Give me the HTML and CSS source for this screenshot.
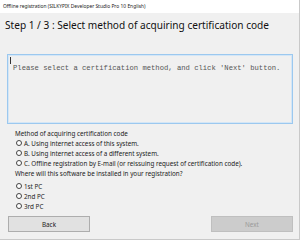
FILE: index.html
```html
<!DOCTYPE html>
<html lang="en">
<head>
  <meta charset="UTF-8">
  <title>Offline registration</title>
  <link rel="stylesheet" href="styles.css">
</head>
<body>
  <div class="window">
    <div class="title-bar">Offline registration (SILKYPIX Developer Studio Pro 10 English)</div>
    <h1 class="step-title">Step 1 / 3 : Select method of acquiring certification code</h1>
    <div class="message-box">
      <span class="caret"></span>
      <p class="message">Please select a certification method, and click 'Next' button.</p>
    </div>
    <div class="options">
      <div class="group-label">Method of acquiring certification code</div>
      <label class="radio-row"><span class="radio"></span>A. Using internet access of this system.</label>
      <label class="radio-row"><span class="radio"></span>B. Using internet access of a different system.</label>
      <label class="radio-row"><span class="radio"></span>C. Offline registration by E-mail (or reissuing request of certification code).</label>
      <div class="group-label">Where will this software be installed in your registration?</div>
      <div class="pc-list">
        <label class="radio-row"><span class="radio"></span>1st PC</label>
        <label class="radio-row"><span class="radio"></span>2nd PC</label>
        <label class="radio-row"><span class="radio"></span>3rd PC</label>
      </div>
    </div>
    <div class="buttons">
      <button class="btn">Back</button>
      <button class="btn disabled">Next</button>
    </div>
  </div>
</body>
</html>
```
FILE: styles.css
```css
body {
  margin: 0;
  font-family: "Noto Sans", "Open Sans", sans-serif;
}
.window {
  width: 299px;
  height: 239px;
  background-color: #f0f0f0;
  border-right: 1px solid #c9c9c9;
  border-bottom: 1px solid #c9c9c9;
  overflow: hidden;
}
.title-bar {
  height: 13px;
  line-height: 13px;
  background-color: #fff;
  font-size: 4.9px;
  color: #222;
  padding-left: 3px;
  white-space: nowrap;
}
.step-title {
  margin: 0;
  padding: 6px 0 0 5px;
  height: 16px;
  line-height: 13px;
  font-size: 10.1px;
  font-weight: normal;
  color: #111;
  white-space: nowrap;
}
.message-box {
  position: relative;
  margin: 19px 0 0 7px;
  width: 284px;
  height: 68px;
  border: 1px solid #9bc8ef;
  box-shadow: 0 0 0 1px #d4e6f6 inset;
}
.caret {
  position: absolute;
  left: 2px;
  top: 2px;
  width: 1px;
  height: 7px;
  background-color: #333;
}
.message {
  margin: 9px 0 0 5px;
  font-family: "Liberation Mono", monospace;
  font-size: 7.2px;
  color: #555;
  white-space: nowrap;
}
.options {
  padding: 4px 0 0 15px;
  font-size: 6.3px;
  color: #222;
}
.group-label,
.radio-row {
  display: flex;
  align-items: center;
  height: 10px;
  white-space: nowrap;
}
.radio {
  width: 4px;
  height: 4px;
  border: 1px solid #444;
  border-radius: 50%;
  background-color: #fff;
  margin: 0 2px 0 1px;
}
.pc-list {
  margin-top: 3px;
}
.buttons {
  display: flex;
  justify-content: space-between;
  padding: 5px 6px 0 8px;
}
.btn {
  width: 82px;
  height: 16px;
  padding: 0;
  font-family: inherit;
  font-size: 6.3px;
  color: #222;
  background-color: #e1e1e1;
  border: 1px solid #adadad;
}
.btn.disabled {
  background-color: #cccccc;
  border-color: #bfbfbf;
  color: #9a9a9a;
}
```
